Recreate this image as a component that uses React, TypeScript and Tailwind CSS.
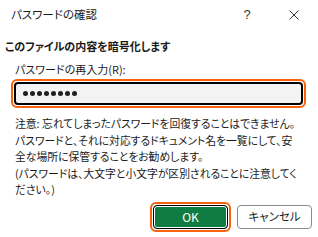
import React from "react";

export default function App() {
  const font = "font-['Noto_Sans_CJK_JP','Noto_Sans',sans-serif] [font-feature-settings:'palt']";
  return (
    <div className={`w-[318px] h-[237px] overflow-hidden bg-white text-[#1a1a1a] flex flex-col ${font}`}>
      <div className="h-[30px] shrink-0 flex items-center pl-[11px] pr-[19px] text-[11.5px]">
        <span>パスワードの確認</span>
        <span className="ml-auto w-[10px] text-center text-[13px] font-['Segoe_UI','Liberation_Sans',sans-serif] text-[#333]">?</span>
        <svg className="ml-[37px]" width="10" height="10" viewBox="0 0 10 10">
          <path d="M0.5 0.5 L9.5 9.5 M9.5 0.5 L0.5 9.5" stroke="#333" strokeWidth="1" fill="none" />
        </svg>
      </div>
      <div className="shrink-0 mt-[8px] pl-[5px] text-[11px] leading-[16px] font-bold whitespace-nowrap">このファイルの内容を暗号化します</div>
      <div className="shrink-0 mt-[7px] pl-[15px] text-[11px] leading-[16px] whitespace-nowrap">パスワードの再入力(R):</div>
      <div className="shrink-0 mt-[2px] ml-[11px] w-[295px] h-[29px] border-2 border-[#f7630c] rounded-[6px] p-px">
        <div className="h-full border-2 border-black rounded-[4px] bg-[#f3f3f3] flex items-center pl-[7px] gap-[2px]">
          {Array.from({ length: 8 }).map((_, i) => (
            <span key={i} className="w-[5px] h-[5px] rounded-full bg-[#1f1f1f]" />
          ))}
        </div>
      </div>
      <div className="shrink-0 mt-[7px] pl-[15px] text-[10.8px] leading-[16.5px] whitespace-nowrap">
        <div>注意: 忘れてしまったパスワードを回復することはできません。</div>
        <div>パスワードと、それに対応するドキュメント名を一覧にして、安</div>
        <div>全な場所に保管することをお勧めします。</div>
        <div>(パスワードは、大文字と小文字が区別されることに注意してく</div>
        <div>ださい。)</div>
      </div>
      <div className="shrink-0 mt-auto mb-[5px] pr-[6px] flex justify-end items-center gap-[6px]">
        <div className="border-2 border-[#f7630c] rounded-[6px] p-px">
          <div className="w-[75px] h-[24px] rounded-[4px] border border-black bg-[#107c41] shadow-[inset_0_0_0_1px_white] flex items-center justify-center text-white text-[12px]">
            OK
          </div>
        </div>
        <div className="w-[75px] h-[24px] rounded-[4px] border border-[#8a8a8a] bg-white flex items-center justify-center text-[11.5px]">
          キャンセル
        </div>
      </div>
    </div>
  );
}
